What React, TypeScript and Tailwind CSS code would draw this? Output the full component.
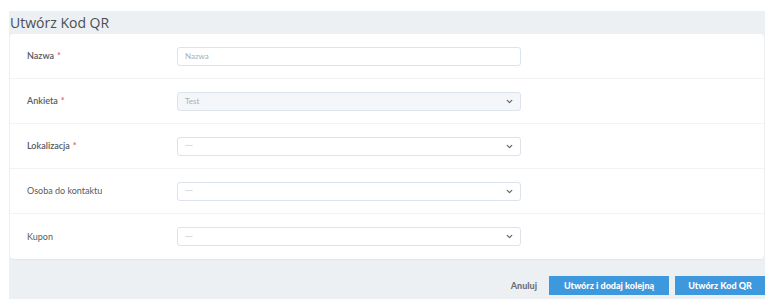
import { ChevronDown } from 'lucide-react';

type Field = {
  label: string;
  required: boolean;
  kind: 'input' | 'select';
  value: string;
  disabled?: boolean;
};

const fields: Field[] = [
  { label: 'Nazwa', required: true, kind: 'input', value: 'Nazwa' },
  { label: 'Ankieta', required: true, kind: 'select', value: 'Test', disabled: true },
  { label: 'Lokalizacja', required: true, kind: 'select', value: '—' },
  { label: 'Osoba do kontaktu', required: false, kind: 'select', value: '—' },
  { label: 'Kupon', required: false, kind: 'select', value: '—' },
];

function FormRow({ field, last }: { field: Field; last: boolean }) {
  const empty = field.value === '—';
  return (
    <div className={`flex items-center h-[45px] ${last ? '' : 'border-b border-[#f1f3f5]'}`}>
      {/* Label column */}
      <div className={`w-[167px] pl-[17px] text-[9px] text-[#555b62] ${field.required ? 'font-semibold' : 'font-normal'}`}>
        {field.label}
        {field.required && <span className="text-[#e06070] ml-[3px]">*</span>}
      </div>

      {/* Control */}
      <div
        className={`w-[344px] h-[19px] rounded-[3px] border border-[#dce3eb] flex items-center justify-between pl-[7px] pr-[6px] ${
          field.disabled ? 'bg-[#f4f6f9]' : 'bg-white'
        }`}
      >
        <span
          className={empty ? 'text-[8px] text-[#c8cdd2] font-["DejaVu_Sans",sans-serif]' : 'text-[8px] text-[#a9afb5]'}
        >
          {field.value}
        </span>
        {field.kind === 'select' && <ChevronDown size={9} strokeWidth={3.2} className="text-[#5f656c]" />}
      </div>
    </div>
  );
}

export default function App() {
  return (
    <div
      className="w-[776px] h-[308px] bg-white pt-[11px] pl-[9px] pr-[11px]"
      style={{ fontFamily: 'Lato, "Open Sans", sans-serif' }}
    >
      <div className="bg-[#edf0f3] h-[288px] flex flex-col">
        {/* Header */}
        <div
          className="h-[23px] flex items-center pl-[1px] text-[14px] text-[#4a4f55]"
          style={{ fontFamily: '"Open Sans", sans-serif' }}
        >
          Utwórz Kod QR
        </div>

        {/* Form card */}
        <div className="mx-[1px] bg-white rounded-[4px] shadow-[0_1px_1px_rgba(0,0,0,0.04)]">
          {fields.map((f, i) => (
            <FormRow key={f.label} field={f} last={i === fields.length - 1} />
          ))}
        </div>

        {/* Footer actions */}
        <div className="flex justify-end items-center gap-[6px] mt-[17px]">
          <button className="text-[9px] font-black text-[#6c7278] mr-[6px]">Anuluj</button>
          <button className="h-[19px] w-[120px] bg-[#3d98dd] text-white text-[9px] font-black">
            Utwórz i dodaj kolejną
          </button>
          <button className="h-[19px] w-[90px] bg-[#3d98dd] text-white text-[9px] font-black">
            Utwórz Kod QR
          </button>
        </div>
      </div>
    </div>
  );
}
